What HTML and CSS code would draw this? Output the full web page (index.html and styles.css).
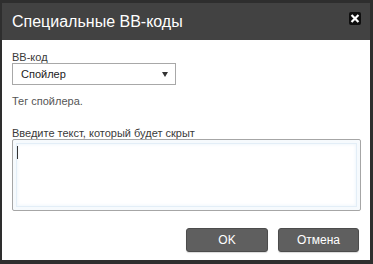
FILE: index.html
```html
<!DOCTYPE html>
<html lang="ru">
<head>
<meta charset="utf-8">
<title>Специальные BB-коды</title>
<link rel="stylesheet" href="styles.css">
</head>
<body>
<div class="frame">
  <div class="dialog">
    <div class="titlebar">
      <div class="title">Специальные BB-коды</div>
      <div class="close">
        <svg width="12" height="13" viewBox="0 0 12 13"><path d="M3.3 3.8 L8.7 9.2 M8.7 3.8 L3.3 9.2" stroke="#fff" stroke-width="2.2" stroke-linecap="square" fill="none"/></svg>
      </div>
    </div>
    <div class="content">
      <div class="label">BB-код</div>
      <div class="select">
        <span class="select-text">Спойлер</span>
        <span class="arrow"></span>
      </div>
      <div class="hint">Тег спойлера.</div>
      <div class="label label2">Введите текст, который будет скрыт</div>
      <div class="textarea"><span class="caret"></span></div>
      <div class="buttons">
        <div class="btn btn-ok">OK</div>
        <div class="btn btn-cancel">Отмена</div>
      </div>
    </div>
  </div>
</div>
</body>
</html>
```
FILE: styles.css
```css
html, body {
  margin: 0;
  padding: 0;
  background: #2f2f2f;
}
.frame {
  width: 373px;
  height: 264px;
  box-sizing: border-box;
  padding: 3px 3px 4px 2px;
  background: #2e2e2e;
  font-family: "Liberation Sans", Arial, sans-serif;
}
.dialog {
  width: 368px;
  height: 257px;
  display: flex;
  flex-direction: column;
}
.titlebar {
  height: 37px;
  background: #424242;
  display: flex;
  justify-content: space-between;
  padding: 0 9px 0 10px;
  box-sizing: border-box;
}
.title {
  color: #fff;
  font-size: 16px;
  line-height: 37px;
}
.close {
  width: 12px;
  height: 13px;
  margin-top: 9px;
  background: #0e0e0e;
  border-radius: 2px;
  display: flex;
}
.content {
  flex: 1;
  background: #fff;
  padding: 11px 9px 8px 10px;
  display: flex;
  flex-direction: column;
}
.label {
  font-size: 11px;
  line-height: 12px;
  color: #3a3a3a;
  height: 12px;
}
.label2 {
  margin-top: 20px;
}
.select {
  width: 164px;
  height: 22px;
  box-sizing: border-box;
  border: 1px solid #a8a8a8;
  display: flex;
  align-items: center;
  justify-content: space-between;
  padding: 0 7px 0 8px;
}
.select-text {
  font-size: 11px;
  line-height: 13px;
  color: #222;
}
.arrow {
  width: 0;
  height: 0;
  border-left: 3px solid transparent;
  border-right: 3px solid transparent;
  border-top: 5px solid #333;
  margin-top: 1px;
}
.hint {
  margin-top: 10px;
  font-size: 11px;
  line-height: 12px;
  color: #555;
}
.textarea {
  height: 72px;
  box-sizing: border-box;
  border: 1px solid #a6a6a6;
  border-radius: 2px;
  box-shadow: inset 0 0 0 3px #f6fafd, inset 0 0 0 4px #e3eef7, inset 0 0 3px 5px #f1f7fc;
  padding: 6px 4px;
}
.caret {
  display: block;
  width: 1px;
  height: 13px;
  background: #333;
}
.buttons {
  margin-top: 17px;
  margin-right: 2px;
  display: flex;
  justify-content: flex-end;
  gap: 10px;
}
.btn {
  height: 24px;
  box-sizing: border-box;
  border: 1px solid #4c4c4c;
  border-radius: 3px;
  background: #5f5f5f;
  color: #fff;
  font-size: 12px;
  line-height: 22px;
  text-align: center;
  box-shadow: 0 1px 1px rgba(0,0,0,0.15);
}
.btn-ok {
  width: 82px;
}
.btn-cancel {
  width: 81px;
}
```
